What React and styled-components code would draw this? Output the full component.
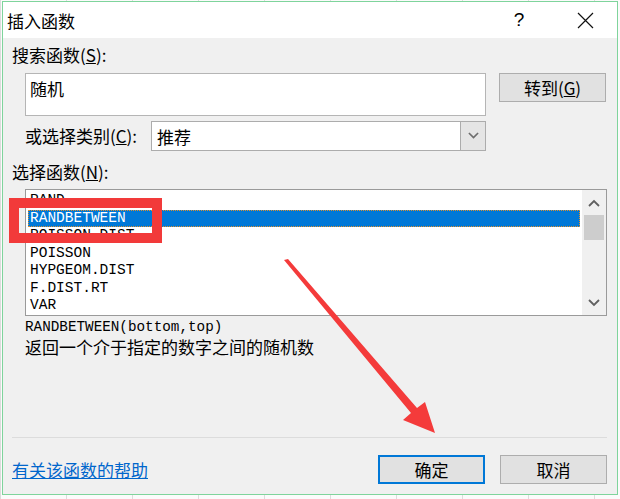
import React from 'react';
import styled, { createGlobalStyle } from 'styled-components';

const GlobalStyle = createGlobalStyle`
  html, body {
    margin: 0;
    padding: 0;
    background: #fbfbfb;
  }
  body {
    font-family: "Noto Sans CJK SC", "Noto Sans", sans-serif;
    color: #000;
  }
`;

const CJK = '"Noto Sans CJK SC", "Noto Sans", sans-serif';
const MONO = '"Liberation Mono", "Noto Sans CJK SC", monospace';

const functions = [
  'RAND',
  'RANDBETWEEN',
  'POISSON.DIST',
  'POISSON',
  'HYPGEOM.DIST',
  'F.DIST.RT',
  'VAR',
];

const Page = styled.div`
  position: relative;
  width: 620px;
  height: 499px;
  overflow: hidden;
  background-color: #fbfbfb;
  background-image: linear-gradient(to right, #dcdcdc 1px, transparent 1px);
  background-size: 66px 100%;
`;

const Dialog = styled.div`
  position: relative;
  margin: 1px 0 0 2px;
  width: 614px;
  height: 492px;
  border: 1px solid #7fd49c;
  background: #f0f0f0;
  display: flex;
  flex-direction: column;
`;

const TitleBar = styled.div`
  height: 36px;
  background: #fff;
  display: flex;
  align-items: center;
  padding-left: 4px;
  font-family: ${CJK};
  font-size: 17px;
`;

const Title = styled.div`
  flex: 1;
`;

const TitleButton = styled.div`
  width: 50px;
  height: 36px;
  display: flex;
  align-items: center;
  justify-content: center;
  font-family: "Liberation Sans", sans-serif;
  font-size: 19px;
  margin-right: ${p => p.$gap || 0}px;
`;

const Body = styled.div`
  flex: 1;
  display: flex;
  flex-direction: column;
  padding: 7px 10px 10px 9px;
`;

const Label = styled.div`
  font-family: ${CJK};
  font-size: 17px;
  line-height: 20px;
  margin-top: ${p => p.$top || 0}px;
  white-space: nowrap;
`;

const Row = styled.div`
  display: flex;
  align-items: ${p => p.$align || 'flex-start'};
  padding-left: 13px;
  margin-top: ${p => p.$top || 0}px;
`;

const SearchBox = styled.div`
  box-sizing: border-box;
  width: 461px;
  height: 43px;
  background: #fff;
  border: 1px solid #b5b5b5;
  padding: 5px 4px;
  font-family: ${CJK};
  font-size: 17px;
  line-height: 20px;
`;

const Button = styled.div`
  box-sizing: border-box;
  width: 107px;
  height: 29px;
  display: flex;
  align-items: center;
  justify-content: center;
  background: #e1e1e1;
  border: ${p => (p.$primary ? '2px solid #0078d7' : '1px solid #adadad')};
  font-family: ${CJK};
  font-size: 17px;
  margin-left: ${p => p.$left || 0}px;
`;

const CategoryLine = styled.div`
  width: 461px;
  display: flex;
  align-items: center;
  justify-content: space-between;
`;

const Select = styled.div`
  box-sizing: border-box;
  width: 335px;
  height: 30px;
  display: flex;
  background: #fff;
  border: 1px solid #acacac;
`;

const SelectValue = styled.div`
  flex: 1;
  padding-left: 5px;
  display: flex;
  align-items: center;
  font-family: ${CJK};
  font-size: 17px;
`;

const DropButton = styled.div`
  width: 24px;
  background: #e5e5e5;
  border-left: 1px solid #acacac;
  display: flex;
  align-items: center;
  justify-content: center;
`;

const ListBox = styled.div`
  box-sizing: border-box;
  width: 582px;
  height: 127px;
  margin-left: 13px;
  margin-top: 7px;
  display: flex;
  background: #fff;
  border: 1px solid #9a9a9a;
`;

const Items = styled.div`
  flex: 1;
  overflow: hidden;
  padding: 2px 2px 0 2px;
`;

const Item = styled.div`
  box-sizing: border-box;
  height: 17.5px;
  line-height: 17.5px;
  padding-left: 2px;
  font-family: ${MONO};
  font-size: 14.5px;
  white-space: nowrap;
  color: ${p => (p.$selected ? '#fff' : '#000')};
  background: ${p => (p.$selected ? '#0078d7' : 'transparent')};
  outline: ${p => (p.$selected ? '1px dotted #e0902c' : 'none')};
  outline-offset: -1px;
`;

const ScrollBar = styled.div`
  width: 24px;
  background: #f0f0f0;
  display: flex;
  flex-direction: column;
  align-items: center;
`;

const ScrollArrow = styled.div`
  height: 25px;
  width: 100%;
  display: flex;
  align-items: center;
  justify-content: center;
`;

const Thumb = styled.div`
  width: 20px;
  height: 25px;
  background: #cdcdcd;
`;

const ScrollTrack = styled.div`
  flex: 1;
`;

const Syntax = styled.div`
  margin: 2px 0 0 13px;
  font-family: ${MONO};
  font-size: 14.3px;
  line-height: 18px;
  white-space: nowrap;
`;

const Description = styled.div`
  margin: 1px 0 0 13px;
  font-family: ${CJK};
  font-size: 17px;
  line-height: 20px;
  white-space: nowrap;
`;

const Separator = styled.div`
  margin-top: auto;
  height: 1px;
  width: 595px;
  background: #dcdcdc;
`;

const Footer = styled.div`
  display: flex;
  align-items: center;
  margin-top: 17px;
`;

const HelpLink = styled.a`
  flex: 1;
  font-family: ${CJK};
  font-size: 17px;
  color: #0066cc;
  text-decoration: underline;
  cursor: pointer;
`;

const RedBox = styled.div`
  position: absolute;
  left: 9px;
  top: 198px;
  width: 153px;
  height: 45px;
  box-sizing: border-box;
  border: 10px solid #f23a3a;
  pointer-events: none;
`;

const Overlay = styled.svg`
  position: absolute;
  left: 0;
  top: 0;
  pointer-events: none;
`;

const Chevron = ({ up, color = '#606060', w = 12 }) => (
  <svg width={w} height={w / 2 + 2} viewBox="0 0 12 8">
    <path
      d={up ? 'M1 7 L6 2 L11 7' : 'M1 1 L6 6 L11 1'}
      fill="none"
      stroke={color}
      strokeWidth="1.8"
    />
  </svg>
);

const CloseIcon = () => (
  <svg width="17" height="17" viewBox="0 0 17 17">
    <path d="M1 1 L16 16 M16 1 L1 16" stroke="#111" strokeWidth="1.2" />
  </svg>
);

export default function App() {
  return (
    <Page>
      <GlobalStyle />
      <Dialog>
        <TitleBar>
          <Title>插入函数</Title>
          <TitleButton $gap={16}>?</TitleButton>
          <TitleButton $gap={7}>
            <CloseIcon />
          </TitleButton>
        </TitleBar>
        <Body>
          <Label>
            搜索函数(<u>S</u>):
          </Label>
          <Row $top={8}>
            <SearchBox>随机</SearchBox>
            <Button $left={13}>
              转到(<u>G</u>)
            </Button>
          </Row>
          <Row $top={5}>
            <CategoryLine>
              <Label>
                或选择类别(<u>C</u>):
              </Label>
              <Select>
                <SelectValue>推荐</SelectValue>
                <DropButton>
                  <Chevron color="#6d6d6d" w={11} />
                </DropButton>
              </Select>
            </CategoryLine>
          </Row>
          <Label $top={11}>
            选择函数(<u>N</u>):
          </Label>
          <ListBox>
            <Items>
              {functions.map(name => (
                <Item key={name} $selected={name === 'RANDBETWEEN'}>
                  {name}
                </Item>
              ))}
            </Items>
            <ScrollBar>
              <ScrollArrow>
                <Chevron up />
              </ScrollArrow>
              <Thumb />
              <ScrollTrack />
              <ScrollArrow>
                <Chevron />
              </ScrollArrow>
            </ScrollBar>
          </ListBox>
          <Syntax>RANDBETWEEN(bottom,top)</Syntax>
          <Description>返回一个介于指定的数字之间的随机数</Description>
          <Separator />
          <Footer>
            <HelpLink>有关该函数的帮助</HelpLink>
            <Button $primary>确定</Button>
            <Button $left={15}>取消</Button>
          </Footer>
        </Body>
      </Dialog>
      <RedBox />
      <Overlay width="620" height="499">
        <polygon
          points="284,260 288,259 417,408 425,402 435,433 403,420 411,413"
          fill="#f43b3b"
        />
      </Overlay>
    </Page>
  );
}
